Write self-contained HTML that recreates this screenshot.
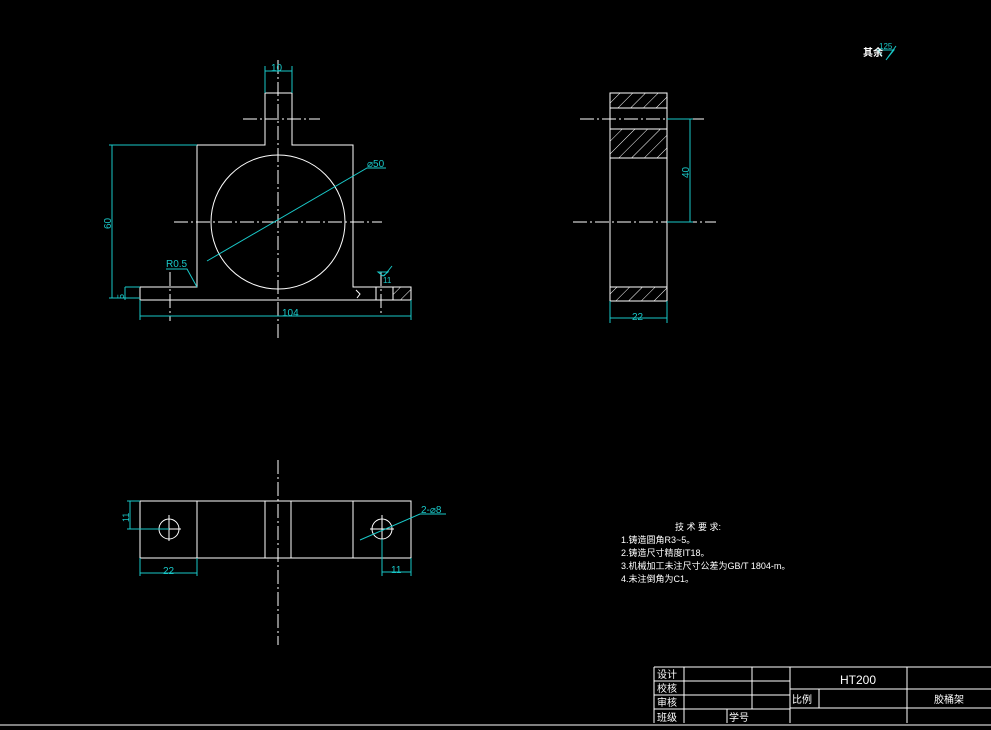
<!DOCTYPE html>
<html><head><meta charset="utf-8"><style>
html,body{margin:0;padding:0;background:#000;}
svg{display:block}
text{font-family:"Liberation Sans","Noto Sans CJK SC",sans-serif;}
</style></head><body>
<svg width="991" height="730" viewBox="0 0 991 730" xmlns="http://www.w3.org/2000/svg">
<defs>
<pattern id="h" patternUnits="userSpaceOnUse" width="9" height="9" patternTransform="rotate(45)">
<line x1="0" y1="0" x2="0" y2="9" stroke="#fff" stroke-width="1"/>
</pattern>
</defs>
<rect width="991" height="730" fill="#000"/>
<g stroke="#fff" stroke-width="1" fill="none">
<path d="M140 287H197V145H265V93H292V145H353V287H411V300H140Z"/>
<circle cx="278" cy="222" r="67"/>
<g stroke-dasharray="14,3,2,3">
<line x1="174" y1="222" x2="382" y2="222"/>
<line x1="243" y1="119" x2="320" y2="119"/>
<line x1="278" y1="60" x2="278" y2="338"/>
<line x1="170" y1="272" x2="170" y2="321"/>
<line x1="381" y1="272" x2="381" y2="315"/>
</g>
<rect x="393" y="287" width="18" height="13" fill="url(#h)"/>
<line x1="393" y1="287" x2="393" y2="300"/>
<line x1="376" y1="287" x2="376" y2="300"/>
<path d="M356 290l4 4-3 4"/>
<rect x="610" y="93" width="57" height="208"/>
<rect x="610" y="93" width="57" height="15" fill="url(#h)"/>
<rect x="610" y="129" width="57" height="29" fill="url(#h)"/>
<rect x="610" y="287" width="57" height="14" fill="url(#h)"/>
<g stroke-dasharray="14,3,2,3">
<line x1="580" y1="119" x2="706" y2="119"/>
<line x1="573" y1="222" x2="716" y2="222"/>
</g>
<rect x="140" y="501" width="271" height="57"/>
<line x1="197" y1="501" x2="197" y2="558"/>
<line x1="265" y1="501" x2="265" y2="558"/>
<line x1="291" y1="501" x2="291" y2="558"/>
<line x1="353" y1="501" x2="353" y2="558"/>
<circle cx="169" cy="529" r="10"/>
<circle cx="382" cy="529" r="10"/>
<line x1="169" y1="515" x2="169" y2="541"/><line x1="157" y1="529" x2="181" y2="529"/>
<line x1="382" y1="515" x2="382" y2="541"/><line x1="370" y1="529" x2="394" y2="529"/>
<line x1="278" y1="460" x2="278" y2="645" stroke-dasharray="14,3,2,3"/>
<line x1="0" y1="725" x2="991" y2="725"/>
<path d="M654 667H991M654 667V723M654 681H790M654 695H790M654 709H790M684 667V723M752 667V709M727 709V723M790 667V723M907 667V723M790 689H991M790 708H991M819 689V708"/>
</g>
<g stroke="#19c8c8" stroke-width="1" fill="none">
<line x1="265" y1="66" x2="265" y2="93"/><line x1="292" y1="66" x2="292" y2="93"/><line x1="265" y1="71" x2="292" y2="71"/>
<line x1="109" y1="145" x2="197" y2="145"/><line x1="109" y1="298" x2="140" y2="298"/>
<line x1="112" y1="145" x2="112" y2="298"/>
<line x1="125" y1="287" x2="140" y2="287"/><line x1="125" y1="287" x2="125" y2="300"/>
<line x1="140" y1="300" x2="140" y2="320"/><line x1="411" y1="300" x2="411" y2="320"/>
<line x1="140" y1="316" x2="411" y2="316"/>
<path d="M207 261L367 168H386"/>
<path d="M166 269H187L197 287"/>
<path d="M383 276l-5 -4h10zM384 276l8-10"/>
<line x1="667" y1="119" x2="693" y2="119"/><line x1="667" y1="222" x2="693" y2="222"/>
<line x1="690" y1="119" x2="690" y2="222"/>
<line x1="610" y1="301" x2="610" y2="323"/><line x1="667" y1="301" x2="667" y2="323"/>
<line x1="610" y1="318" x2="667" y2="318"/>
<line x1="127" y1="501" x2="140" y2="501"/><line x1="127" y1="529" x2="169" y2="529"/>
<line x1="130" y1="501" x2="130" y2="529"/>
<line x1="140" y1="558" x2="140" y2="576"/><line x1="197" y1="558" x2="197" y2="576"/>
<line x1="140" y1="573" x2="197" y2="573"/>
<line x1="382" y1="539" x2="382" y2="576"/><line x1="411" y1="558" x2="411" y2="576"/>
<line x1="382" y1="572" x2="411" y2="572"/>
<path d="M360 540L420 514H446"/>
<path d="M882 56l-4-6h16l-8 10M886 60l10-14"/>
</g>
<g fill="#19c8c8" font-size="10">
<text x="271" y="71">10</text>
<text x="282" y="316">104</text>
<text x="367" y="167">⌀50</text>
<text x="166" y="267">R0.5</text>
<text x="383" y="283" font-size="8">11</text>
<text transform="translate(111,229) rotate(-90)">60</text>
<text transform="translate(124,299) rotate(-90)" font-size="9">5</text>
<text transform="translate(689,178) rotate(-90)">40</text>
<text x="632" y="320">22</text>
<text transform="translate(129,522) rotate(-90)" font-size="9">11</text>
<text x="163" y="574">22</text>
<text x="391" y="573">11</text>
<text x="421" y="513">2-⌀8</text>
<text x="879" y="49" font-size="8">125</text>
</g>
<g fill="#fff" font-size="9">
<text x="863" y="56" font-size="10" font-weight="bold">其余</text>
<text x="675" y="530">技 术 要 求:</text>
<text x="621" y="543">1.铸造圆角R3~5。</text>
<text x="621" y="556">2.铸造尺寸精度IT18。</text>
<text x="621" y="569">3.机械加工未注尺寸公差为GB/T 1804-m。</text>
<text x="621" y="582">4.未注倒角为C1。</text>
<g font-size="10">
<text x="657" y="678">设计</text>
<text x="657" y="692">校核</text>
<text x="657" y="706">审核</text>
<text x="657" y="721">班级</text>
<text x="729" y="721">学号</text>
<text x="792" y="703">比例</text>
<text x="934" y="703">胶桶架</text>
</g>
<text x="840" y="684" font-size="12" font-family="Liberation Serif, serif">HT200</text>
</g>
</svg>
</body></html>
